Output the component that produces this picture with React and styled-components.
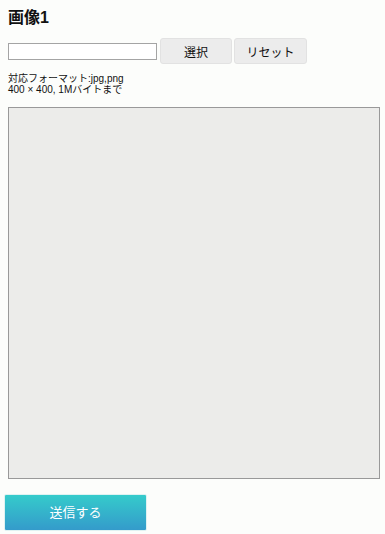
import React from 'react';
import styled, { createGlobalStyle } from 'styled-components';

const GlobalStyle = createGlobalStyle`
  html, body {
    margin: 0;
    padding: 0;
    background: #fcfdfb;
  }
  body {
    font-family: "Liberation Sans", "Noto Sans CJK JP", sans-serif;
    color: #111;
  }
`;

const Page = styled.div`
  width: 385px;
  height: 534px;
  box-sizing: border-box;
  padding: 8px 6px 0 8px;
`;

const Title = styled.h2`
  margin: 0;
  height: 20px;
  font-size: 16px;
  line-height: 20px;
  font-weight: bold;
  color: #111;
`;

const UploadRow = styled.div`
  display: flex;
  align-items: center;
  gap: 2px;
  margin-top: 10px;
`;

const FileInput = styled.input`
  box-sizing: border-box;
  width: 149px;
  height: 17px;
  margin: 0 1px 0 0;
  padding: 0 2px;
  border: 1px solid #a4a4a4;
  background: #fff;
  outline: none;
`;

const GrayButton = styled.button`
  box-sizing: border-box;
  width: ${p => p.$w}px;
  height: 26px;
  padding: 0;
  border: 1px solid #e2e2e2;
  border-radius: 3px;
  background: #ececec;
  font-family: "Liberation Sans", "Noto Sans CJK JP", sans-serif;
  font-size: 12px;
  color: #111;
`;

const Note = styled.p`
  margin: 9px 0 0;
  font-size: 10px;
  line-height: 11px;
  color: #111;
`;

const Preview = styled.div`
  box-sizing: border-box;
  width: 372px;
  height: 372px;
  margin-top: 12px;
  border: 1px solid #999;
  background: #ececea;
`;

const SubmitButton = styled.button`
  box-sizing: border-box;
  display: block;
  width: 143px;
  height: 37px;
  margin: 15px 0 0 -4px;
  padding: 0 0 3px;
  border: 1px solid #dff2f2;
  border-radius: 2px;
  background: linear-gradient(to bottom, #35cbcb, #349bcb);
  color: #fff;
  font-family: "Liberation Sans", "Noto Sans CJK JP", sans-serif;
  font-size: 13px;
`;

export default function App() {
  return (
    <>
      <GlobalStyle />
      <Page>
        <Title>画像1</Title>
        <UploadRow>
          <FileInput type="text" />
          <GrayButton $w={72}>選択</GrayButton>
          <GrayButton $w={73}>リセット</GrayButton>
        </UploadRow>
        <Note>
          対応フォーマット:jpg,png
          <br />
          400 × 400, 1Mバイトまで
        </Note>
        <Preview />
        <SubmitButton>送信する</SubmitButton>
      </Page>
    </>
  );
}
